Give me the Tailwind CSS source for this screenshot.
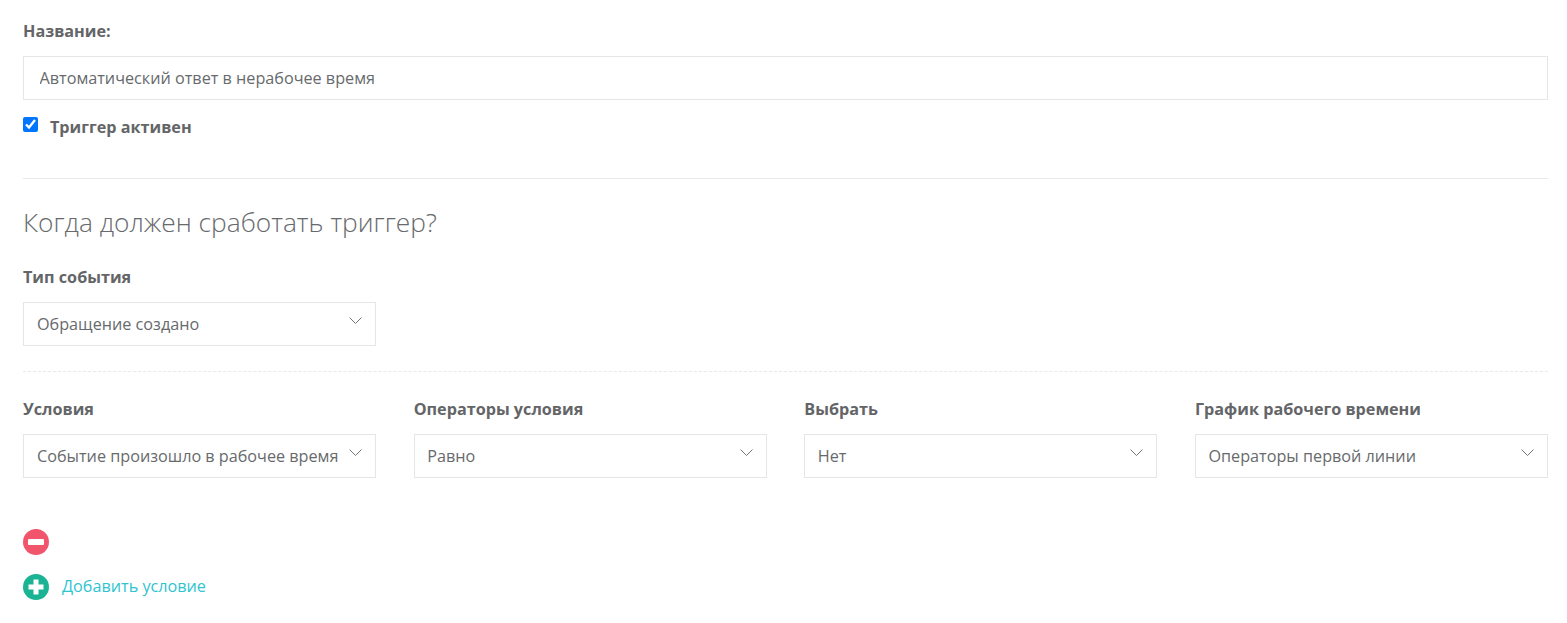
<!DOCTYPE html>
<html lang="ru">

<head>
  <meta charset="UTF-8">
  <meta name="viewport" content="width=device-width, initial-scale=1.0">
  <title>Триггер</title>
  <script src="https://cdn.jsdelivr.net/npm/@tailwindcss/browser@4"></script>
</head>

<body class="bg-white font-['Open_Sans',sans-serif] text-[#676a6c] text-[16.2px] overflow-hidden">
  <div class="pl-[23px] pr-[19px] pt-[20px]">

    <!-- Name -->
    <label class="block font-bold leading-[22px] mb-[14px] text-[#636567]">Название:</label>
    <input type="text" value="Автоматический ответ в нерабочее время"
      class="block w-full h-[44px] border border-[#e5e6e7] pl-[15.5px] pr-4 text-[16.2px] text-[#676a6c] outline-none">
    <div class="flex items-center mt-[14px] h-[26px]">
      <input type="checkbox" checked class="w-[15px] h-[15px] m-0 accent-[#0075ff] relative top-[-3px]">
      <span class="ml-[12px] font-bold text-[#636567]">Триггер активен</span>
    </div>

    <div class="border-t border-[#e7eaec] mt-[38px]"></div>

    <h2 class="text-[26.3px] font-light leading-[32px] mt-[27px] text-[#676a6c]">Когда должен сработать триггер?</h2>

    <!-- Event type -->
    <label class="block font-bold leading-[22px] mt-[28px] mb-[14px] text-[#636567]">Тип события</label>
    <div class="w-[353px] h-[44px] border border-[#e5e6e7] pl-[13px] pr-[13px] flex items-center justify-between">
      <span>Обращение создано</span>
      <svg class="w-[13px] h-[7px] mb-[8px]" viewBox="0 0 13 7" fill="none" stroke="#74777a" stroke-width="1"><path d="M.5.500 6.500 6.500 12.500.500"/></svg>
    </div>

    <div class="border-t border-dashed border-[#e7eaec] mt-[25px]"></div>

    <!-- Conditions -->
    <div class="grid grid-cols-4 gap-x-[37.67px] mt-[26px]">
      <div>
        <label class="block font-bold leading-[22px] mb-[14px] text-[#636567]">Условия</label>
        <div class="h-[44px] border border-[#e5e6e7] pl-[13px] pr-[13px] flex items-center justify-between">
          <span class="whitespace-nowrap">Событие произошло в рабочее время</span>
          <svg class="w-[13px] h-[7px] mb-[8px] shrink-0" viewBox="0 0 13 7" fill="none" stroke="#74777a" stroke-width="1"><path d="M.5.500 6.500 6.500 12.500.500"/></svg>
        </div>
      </div>
      <div>
        <label class="block font-bold leading-[22px] mb-[14px] text-[#636567]">Операторы условия</label>
        <div class="h-[44px] border border-[#e5e6e7] pl-[12.5px] pr-[13px] flex items-center justify-between">
          <span>Равно</span>
          <svg class="w-[13px] h-[7px] mb-[8px]" viewBox="0 0 13 7" fill="none" stroke="#74777a" stroke-width="1"><path d="M.5.500 6.500 6.500 12.500.500"/></svg>
        </div>
      </div>
      <div>
        <label class="block font-bold leading-[22px] mb-[14px] text-[#636567]">Выбрать</label>
        <div class="h-[44px] border border-[#e5e6e7] pl-[12.5px] pr-[13px] flex items-center justify-between">
          <span>Нет</span>
          <svg class="w-[13px] h-[7px] mb-[8px]" viewBox="0 0 13 7" fill="none" stroke="#74777a" stroke-width="1"><path d="M.5.500 6.500 6.500 12.500.500"/></svg>
        </div>
      </div>
      <div>
        <label class="block font-bold leading-[22px] mb-[14px] text-[#636567]">График рабочего времени</label>
        <div class="h-[44px] border border-[#e5e6e7] pl-[12.5px] pr-[13px] flex items-center justify-between">
          <span>Операторы первой линии</span>
          <svg class="w-[13px] h-[7px] mb-[8px]" viewBox="0 0 13 7" fill="none" stroke="#74777a" stroke-width="1"><path d="M.5.500 6.500 6.500 12.500.500"/></svg>
        </div>
      </div>
    </div>

    <!-- Remove / add -->
    <div class="mt-[51px] w-[26px] h-[26px] rounded-full bg-[#f1556c] flex items-center justify-center">
      <span class="block w-[16px] h-[6px] rounded-[1px] bg-white"></span>
    </div>
    <div class="flex items-center mt-[19px]">
      <svg class="w-[26px] h-[26px]" viewBox="0 0 26 26">
        <circle cx="13" cy="13" r="13" fill="#1ab394"/>
        <path d="M10.500 5.500h5v5h5v5h-5v5h-5v-5h-5v-5h5z" fill="#fff"/>
      </svg>
      <a class="ml-[13px] pb-[2px] text-[#2fc4cf]">Добавить условие</a>
    </div>
  </div>
</body>

</html>
